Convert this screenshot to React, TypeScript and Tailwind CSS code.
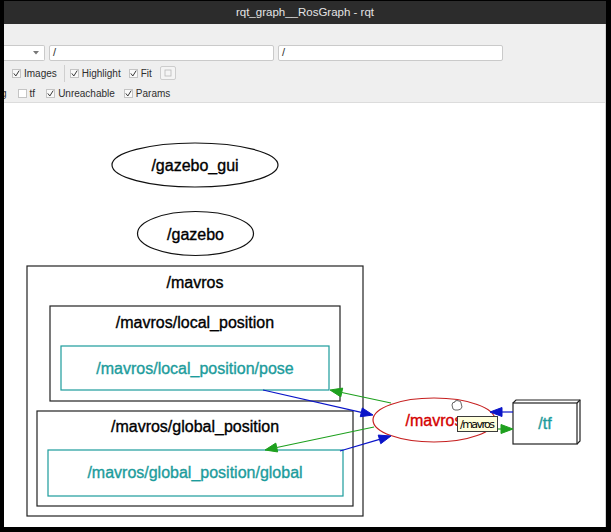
import React from "react";

const TEAL = "#1c9c9c";
const BLUE = "#0a14c8";
const GREEN = "#1ea01e";

type ArrowProps = { x1: number; y1: number; x2: number; y2: number; color: string };

// graphviz style edge: line + filled head ending at (x2, y2)
const Arrow = ({ x1, y1, x2, y2, color }: ArrowProps) => {
    const dx = x2 - x1;
    const dy = y2 - y1;
    const len = Math.sqrt(dx * dx + dy * dy);
    const ux = dx / len;
    const uy = dy / len;
    const bx = x2 - ux * 12;
    const by = y2 - uy * 12;
    const px = -uy * 4.5;
    const py = ux * 4.5;
    return (
        <g>
            <line x1={x1} y1={y1} x2={bx} y2={by} stroke={color} strokeWidth={1.2} />
            <polygon points={`${x2},${y2} ${bx + px},${by + py} ${bx - px},${by - py}`} fill={color} stroke={color} strokeWidth={1} />
        </g>
    );
};

type LabelProps = { x: number; y: number; fill?: string; children: React.ReactNode };

const Label = ({ x, y, fill = "#000", children }: LabelProps) => (
    <text x={x} y={y} textAnchor="middle" fontSize="16" fill={fill} stroke={fill} strokeWidth="0.35">
        {children}
    </text>
);

const Check = ({ checked = true }: { checked?: boolean }) => (
    <span className="w-[9px] h-[9px] border border-[#c4c4c4] bg-[#fafafa] flex items-center justify-center">
        {checked ? (
            <svg width="7" height="7" viewBox="0 0 7 7">
                <path d="M0.8 3.4 L2.8 6 L6.2 0.6" fill="none" stroke="#3a3a3a" strokeWidth="1" />
            </svg>
        ) : null}
    </span>
);

const Opt = ({ label, checked = true }: { label: string; checked?: boolean }) => (
    <div className="flex items-center gap-[3px]">
        <Check checked={checked} />
        <span>{label}</span>
    </div>
);

const Graph = () => (
    <svg width="601" height="423" viewBox="4 104 601 423" className="block" style={{ fontFamily: "'Liberation Sans', Arial, sans-serif" }}>
        <ellipse cx="195" cy="166" rx="83" ry="22" fill="none" stroke="#111" strokeWidth="1.2" />
        <Label x={195} y={172}>/gazebo_gui</Label>

        <ellipse cx="195.5" cy="234.5" rx="58" ry="22" fill="none" stroke="#111" strokeWidth="1.2" />
        <Label x={195.5} y={240.5}>/gazebo</Label>

        <rect x="27" y="267" width="336" height="250" fill="none" stroke="#222" strokeWidth="1.2" />
        <Label x={195} y={289}>/mavros</Label>

        <rect x="50" y="307" width="290" height="95" fill="none" stroke="#222" strokeWidth="1.2" />
        <Label x={195} y={329}>/mavros/local_position</Label>

        <rect x="61" y="347" width="268" height="44" fill="none" stroke={TEAL} strokeWidth="1.2" />
        <Label x={195} y={375} fill={TEAL}>/mavros/local_position/pose</Label>

        <rect x="37" y="412" width="316" height="95" fill="none" stroke="#222" strokeWidth="1.2" />
        <Label x={195} y={433}>/mavros/global_position</Label>

        <rect x="48" y="451" width="295" height="46" fill="none" stroke={TEAL} strokeWidth="1.2" />
        <Label x={195} y={479} fill={TEAL}>/mavros/global_position/global</Label>

        <ellipse cx="434" cy="421" rx="61" ry="22" fill="none" stroke="#c62020" strokeWidth="1.2" />
        <Label x={434} y={427} fill="#d40000">/mavros</Label>

        {/* /tf box with 3d edge */}
        <path d="M513 404 L516 401 L580 401 L580 442 L577 445" fill="none" stroke="#222" strokeWidth="1.2" />
        <line x1="577" y1="404" x2="580" y2="401" stroke="#222" strokeWidth="1.2" />
        <rect x="513" y="404" width="64" height="41" fill="#fff" stroke="#222" strokeWidth="1.2" />
        <Label x={545} y={430} fill={TEAL}>/tf</Label>

        <Arrow x1={263} y1={391} x2={373} y2={416} color={BLUE} />
        <Arrow x1={391} y1={404} x2={330} y2={391} color={GREEN} />
        <Arrow x1={374} y1={428} x2={265} y2={451} color={GREEN} />
        <Arrow x1={340} y1={452} x2={391} y2={437} color={BLUE} />
        <Arrow x1={513} y1={413} x2={490} y2={413} color={BLUE} />
        <Arrow x1={495} y1={430} x2={513} y2={430} color={GREEN} />

        {/* hand cursor */}
        <path d="M453 410 L452 406 Q452 403 455 403 L455 402 Q457 401 459 402 Q461 402 461 404 L462 408 Q461 411 458 411 L455 411 Z" fill="#fff" stroke="#555" strokeWidth="0.9" />

        {/* tooltip */}
        <rect x="457.5" y="417.5" width="40" height="15" fill="#ffffdc" stroke="#3b3b3b" strokeWidth="1" />
        <text x="460" y="429" fontSize="11" fill="#000" style={{ fontFamily: "'DejaVu Sans', sans-serif" }} textLength="35">/mavros</text>
    </svg>
);

export default function App() {
    return (
        <div className="w-[611px] h-[532px] bg-black border-l-4 border-t border-r-[5px] border-b-[5px] border-black flex flex-col overflow-hidden" style={{ fontFamily: "'Liberation Sans', Arial, sans-serif" }}>
            <div className="h-[23px] bg-[#2c2c2c] flex items-center justify-center text-[11.5px] text-[#e4e4e4]">
                rqt_graph__RosGraph - rqt
            </div>

            <div className="flex-1 flex flex-col bg-white border-r border-[#d4d4d4]">
                <div className="h-[79px] bg-[#efefef] text-[10px] text-[#2e2e2e] border-b border-[#dcdcdc]">
                    <div className="flex items-center gap-[4px] mt-[20px] h-[17px]">
                        <div className="w-[41px] h-[16px] bg-white border border-[#cacaca] border-l-0 rounded-r-[2px] flex items-center justify-end pr-[5px]">
                            <svg width="6" height="4" viewBox="0 0 6 4">
                                <path d="M0 0 L6 0 L3 3.5 Z" fill="#777" />
                            </svg>
                        </div>
                        <div className="w-[225px] h-[16px] bg-white border border-[#cacaca] rounded-[2px] flex items-center pl-[3px] text-[11px]">/</div>
                        <div className="w-[225px] h-[16px] bg-white border border-[#cacaca] rounded-[2px] flex items-center pl-[3px] text-[11px]">/</div>
                    </div>

                    <div className="flex items-center h-[18px] mt-[3px] pl-[8px]">
                        <Opt label="Images" />
                        <div className="w-px h-[17px] bg-[#cfcfcf] ml-[7px] mr-[5px]" />
                        <div className="flex items-center gap-[8px]">
                            <Opt label="Highlight" />
                            <Opt label="Fit" />
                        </div>
                        <div className="ml-[8px] w-[16px] h-[14px] border border-[#cdcdcd] bg-[#f4f4f4] rounded-[2px] flex items-center justify-center">
                            <svg width="8" height="8" viewBox="0 0 8 8">
                                <rect x="1" y="1" width="6" height="6" fill="none" stroke="#b9b9b9" strokeWidth="0.8" />
                            </svg>
                        </div>
                    </div>

                    <div className="flex items-center h-[17px] mt-[3px] gap-[8px]">
                        <span className="-ml-[3px]">g</span>
                        <div className="flex items-center gap-[3px] ml-[3px]">
                            <span className="w-[9px] h-[9px] border border-[#c4c4c4] bg-white" />
                            <span>tf</span>
                        </div>
                        <div className="flex items-center gap-[9px] ml-[3px]">
                            <Opt label="Unreachable" />
                            <Opt label="Params" />
                        </div>
                    </div>
                </div>

                <div className="flex-1 bg-white overflow-hidden">
                    <Graph />
                </div>
            </div>
        </div>
    );
}
